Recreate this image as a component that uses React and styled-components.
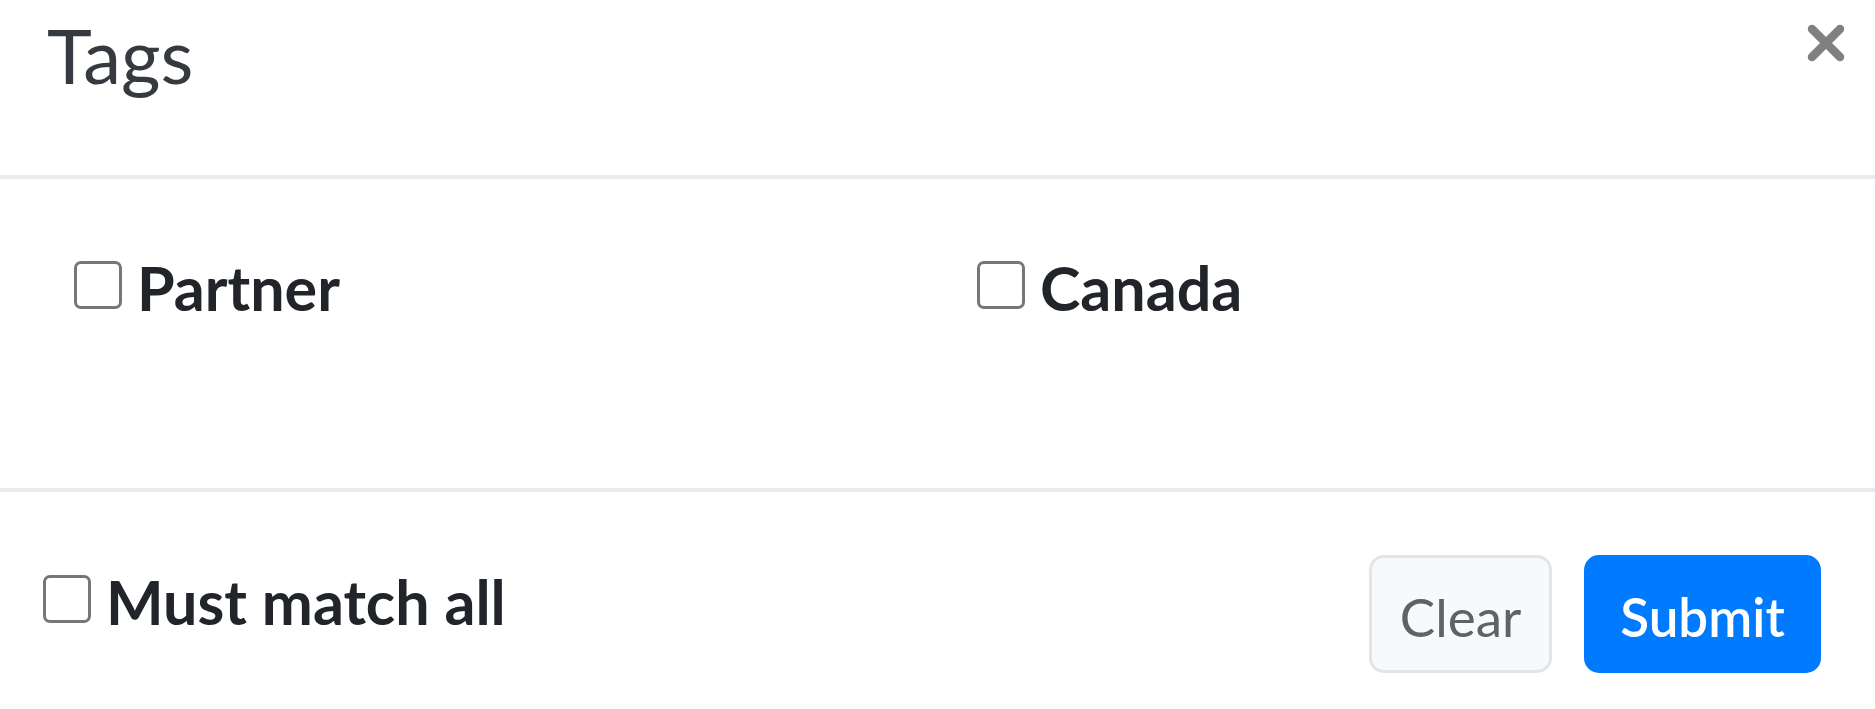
import React from 'react'
import styled, { createGlobalStyle } from 'styled-components'

const GlobalStyle = createGlobalStyle`
  html, body {
    margin: 0;
    padding: 0;
    background: #fff;
  }
  body {
    font-family: Lato, "Open Sans", sans-serif;
    color: #212529;
  }
`

const Modal = styled.div`
  width: 1875px;
  height: 709px;
  display: flex;
  flex-direction: column;
  background: #fff;
  overflow: hidden;
`

const Header = styled.div`
  height: 179px;
  display: flex;
  justify-content: space-between;
  align-items: flex-start;
  padding: 0 30px 0 47px;
  border-bottom: 4px solid #e9ecef;
  box-sizing: border-box;
  flex: none;
`

const Title = styled.h5`
  margin: 0;
  font-size: 76px;
  font-weight: 400;
  line-height: 110px;
  color: #343a40;
`

const Close = styled.button`
  border: 0;
  background: none;
  padding: 0;
  margin-top: 24px;
  width: 38px;
  height: 38px;
  cursor: pointer;
  display: flex;
`

const Body = styled.div`
  height: 313px;
  box-sizing: border-box;
  flex: none;
  padding: 82px 0 0 74px;
  border-bottom: 4px solid #e9ecef;
  display: grid;
  grid-template-columns: 903px 1fr;
  align-content: start;
`

const Check = styled.label`
  display: flex;
  align-items: flex-start;
  gap: 15px;
  margin-top: ${({ offset }) => offset || 0}px;
  font-size: 61px;
  font-weight: 700;
  line-height: 48px;
  color: #212529;
  cursor: pointer;
`

const Text = styled.span`
  padding-top: 3px;
`

const Box = styled.input.attrs({ type: 'checkbox' })`
  appearance: none;
  margin: 0;
  width: 48px;
  height: 48px;
  flex: none;
  box-sizing: border-box;
  border: 3px solid #767676;
  border-radius: 7px;
  background: #fff;
`

const Footer = styled.div`
  flex: 1;
  display: flex;
  align-items: flex-start;
  justify-content: space-between;
  padding: 63px 54px 0 43px;
`

const Buttons = styled.div`
  display: flex;
  gap: 32px;
`

const Button = styled.button`
  height: 118px;
  width: ${({ w }) => w}px;
  box-sizing: border-box;
  border-radius: 15px;
  font-family: Lato, "Open Sans", sans-serif;
  font-size: 53px;
  padding: 4px 0 0;
  cursor: pointer;
  ${({ primary }) => primary ? `
    background: #007bff;
    border: 3px solid #007bff;
    color: #fff;
    font-weight: 600;
  ` : `
    background: #f8f9fa;
    border: 3px solid #e3e4e6;
    color: #5f6266;
    font-weight: 400;
  `}
`

export default function App () {
  return (
    <Modal>
      <GlobalStyle />
      <Header>
        <Title>Tags</Title>
        <Close aria-label='Close'>
          <svg width='38' height='38' viewBox='0 0 38 38'>
            <path d='M5 5L33 33M33 5L5 33' stroke='#808080' strokeWidth='8.5' strokeLinecap='round' />
          </svg>
        </Close>
      </Header>
      <Body>
        <Check><Box /><Text>Partner</Text></Check>
        <Check><Box /><Text>Canada</Text></Check>
      </Body>
      <Footer>
        <Check offset={20}><Box /><Text>Must match all</Text></Check>
        <Buttons>
          <Button w={183}>Clear</Button>
          <Button w={237} primary>Submit</Button>
        </Buttons>
      </Footer>
    </Modal>
  )
}
